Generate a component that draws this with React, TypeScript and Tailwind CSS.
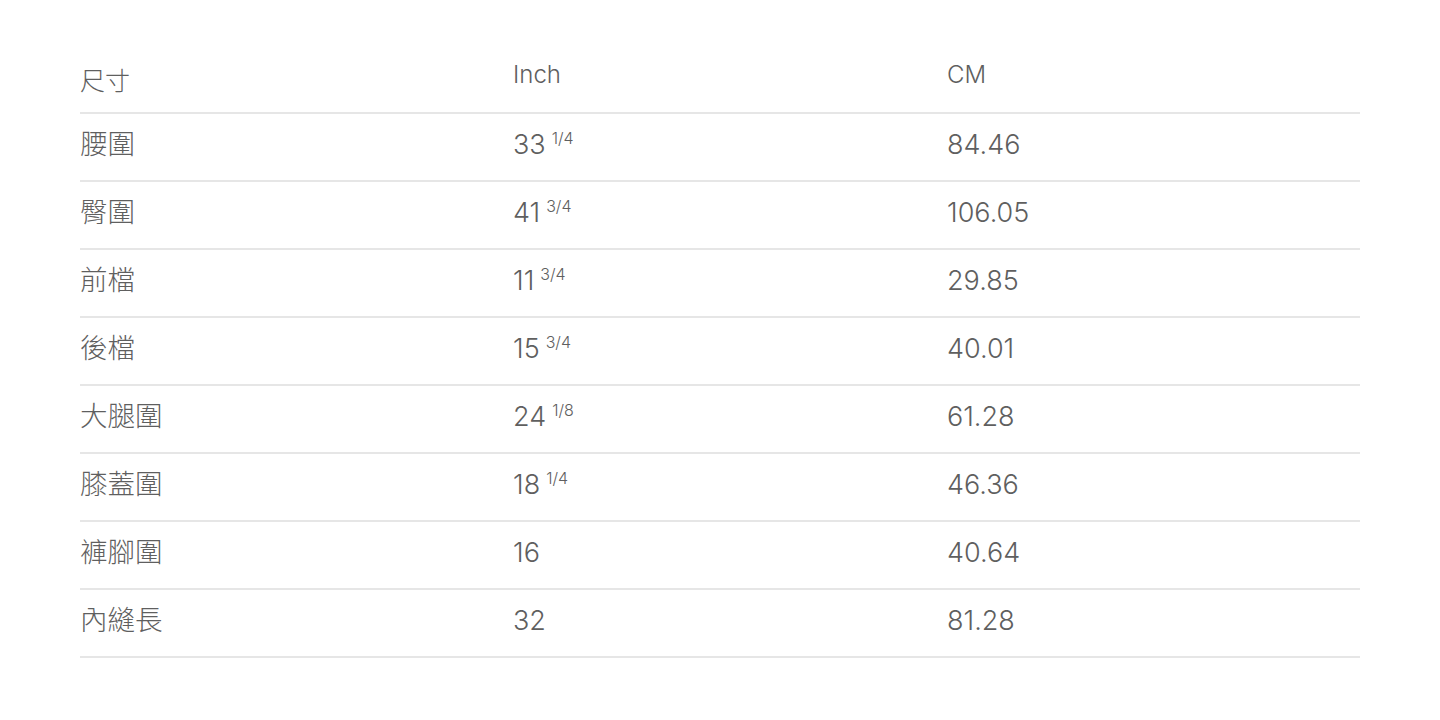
const rows: { label: string; inch: string; frac?: string; cm: string }[] = [
  { label: '腰圍', inch: '33', frac: '1/4', cm: '84.46' },
  { label: '臀圍', inch: '41', frac: '3/4', cm: '106.05' },
  { label: '前檔', inch: '11', frac: '3/4', cm: '29.85' },
  { label: '後檔', inch: '15', frac: '3/4', cm: '40.01' },
  { label: '大腿圍', inch: '24', frac: '1/8', cm: '61.28' },
  { label: '膝蓋圍', inch: '18', frac: '1/4', cm: '46.36' },
  { label: '褲腳圍', inch: '16', cm: '40.64' },
  { label: '內縫長', inch: '32', cm: '81.28' },
]

const FONT = { fontFamily: 'Inter, "Noto Sans CJK TC", sans-serif' }

export default function App() {
  return (
    <div className="min-h-[720px] bg-white px-20 pt-[56px] text-[#5f5f5f] font-light" style={FONT}>
      <div className="grid grid-cols-[433px_434px_1fr] border-b-2 border-[#e6e6e6] h-[58px] items-start">
        <div className="pt-[9px] text-[25px] leading-[32px]">尺寸</div>
        <div className="pt-[3px] text-[24px] leading-[32px]">Inch</div>
        <div className="pt-[3px] text-[24px] leading-[32px]">CM</div>
      </div>
      {rows.map((r) => (
        <div
          key={r.label}
          className="grid grid-cols-[433px_434px_1fr] border-b-2 border-[#e6e6e6] h-[68px] items-start pt-[13px]"
        >
          <div className="text-[27.5px] leading-[35px]">{r.label}</div>
          <div className="text-[27px] leading-[35px]">
            {r.inch}
            {r.frac && <span className="ml-[6px] align-[10px] text-[16px] leading-none">{r.frac}</span>}
          </div>
          <div className="text-[27px] leading-[35px]">{r.cm}</div>
        </div>
      ))}
    </div>
  )
}
